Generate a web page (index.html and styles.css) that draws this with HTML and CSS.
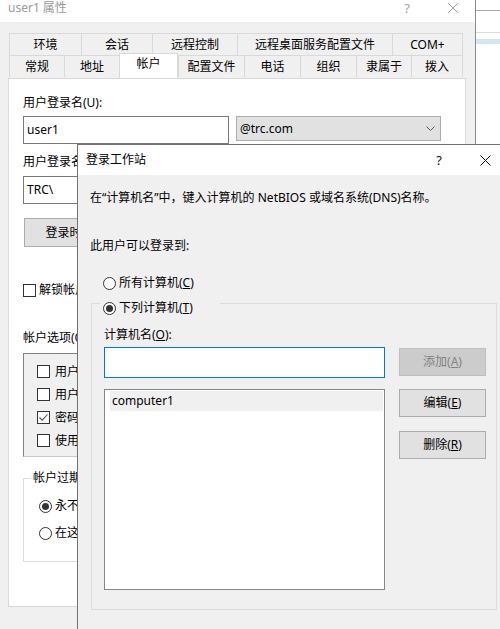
FILE: index.html
```html
<!DOCTYPE html>
<html lang="zh-CN">
<head>
<meta charset="utf-8">
<title>user1 属性</title>
<link rel="stylesheet" href="styles.css">
</head>
<body>
<div class="screen">
  <div class="win">
    <div class="win-title">
      <span class="win-caption">user1 属性</span>
      <span class="cap cap-help">?</span>
      <span class="cap"><svg width="10" height="10" viewBox="0 0 10 10"><path d="M0.5 0.5L9.5 9.5M9.5 0.5L0.5 9.5" stroke="#a0a0a0" stroke-width="1"/></svg></span>
    </div>
    <div class="win-body">
      <div class="tabs">
        <div class="tab-row row-back">
          <div class="tab">环境</div>
          <div class="tab">会话</div>
          <div class="tab">远程控制</div>
          <div class="tab">远程桌面服务配置文件</div>
          <div class="tab">COM+</div>
        </div>
        <div class="tab-row row-front">
          <div class="tab">常规</div>
          <div class="tab">地址</div>
          <div class="tab sel">帐户</div>
          <div class="tab">配置文件</div>
          <div class="tab">电话</div>
          <div class="tab">组织</div>
          <div class="tab">隶属于</div>
          <div class="tab">拨入</div>
        </div>
      </div>
      <div class="panel">
        <div class="lbl lbl-first">用户登录名(U):</div>
        <div class="field-row">
          <div class="tb tb-wide">user1</div>
          <div class="combo"><span>@trc.com</span><svg width="9" height="5" viewBox="0 0 9 5"><path d="M0.5 0.5L4.5 4.5L8.5 0.5" fill="none" stroke="#5a5a5a" stroke-width="1"/></svg></div>
        </div>
        <div class="lbl lbl-second">用户登录名(Windows 2000 以前版本)(D):</div>
        <div class="field-row field-row-2">
          <div class="tb tb-domain">TRC\</div>
          <div class="tb tb-name">user1</div>
        </div>
        <div class="btn btn-hours">登录时间(L)...</div>
        <div class="check-line">
          <span class="cb"></span><span>解锁帐户(N)</span>
        </div>
        <div class="lbl lbl-options">帐户选项(O):</div>
        <div class="opt-list">
          <div class="opt"><span class="cb"></span><span>用户下次登录时须更改密码</span></div>
          <div class="opt"><span class="cb"></span><span>用户不能更改密码</span></div>
          <div class="opt"><span class="cb on"><svg width="11" height="11" viewBox="0 0 11 11"><path d="M1.5 5.5L4.2 8.2L9.5 2.5" fill="none" stroke="#555" stroke-width="1.1"/></svg></span><span>密码永不过期</span></div>
          <div class="opt"><span class="cb"></span><span>使用可逆加密存储密码</span></div>
          <div class="opt"><span class="cb"></span><span>帐户已禁用</span></div>
        </div>
        <div class="expire">
          <span class="expire-legend">帐户过期</span>
          <div class="radio-line expire-first"><span class="rd on"></span><span>永不过期(V)</span></div>
          <div class="radio-line expire-second"><span class="rd"></span><span>在这之后(E):</span></div>
        </div>
      </div>
    </div>
  </div>
  <div class="desk-strip">
    <div class="desk-line dark"></div>
    <div class="desk-line light"></div>
    <div class="desk-band"></div>
  </div>
</div>

<div class="dlg">
  <div class="dlg-title">
    <span class="dlg-caption">登录工作站</span>
    <span class="cap cap-help dark">?</span>
    <span class="cap"><svg width="11" height="11" viewBox="0 0 11 11"><path d="M0.5 0.5L10.5 10.5M10.5 0.5L0.5 10.5" stroke="#111" stroke-width="1"/></svg></span>
  </div>
  <div class="dlg-body">
    <p class="intro">在“计算机名”中，键入计算机的 NetBIOS 或域名系统(DNS)名称。</p>
    <p class="can">此用户可以登录到:</p>
    <div class="radio-line all"><span class="rd"></span><span>所有计算机(<u>C</u>)</span></div>
    <div class="group">
      <div class="radio-line legend"><span class="rd on"></span><span>下列计算机(<u>T</u>)</span></div>
      <div class="lbl name-lbl">计算机名(<u>O</u>):</div>
      <div class="group-main">
        <div class="col-left">
          <div class="name-input"></div>
          <div class="pc-list">
            <div class="pc-item">computer1</div>
          </div>
        </div>
        <div class="col-right">
          <div class="btn dbtn disabled">添加(<u>A</u>)</div>
          <div class="btn dbtn">编辑(<u>E</u>)</div>
          <div class="btn dbtn">删除(<u>R</u>)</div>
        </div>
      </div>
    </div>
  </div>
</div>
</body>
</html>
```

FILE: styles.css
```css
* { box-sizing: border-box; }

html, body {
  margin: 0;
  padding: 0;
}

body {
  width: 500px;
  height: 629px;
  overflow: hidden;
  position: relative;
  background: #fff;
  color: #000;
  font-family: "Noto Sans", "Noto Sans CJK SC", sans-serif;
  font-size: 12px;
  line-height: 16px;
}

p { margin: 0; }
u { text-decoration: underline; text-underline-offset: 1px; }

.screen {
  display: flex;
  height: 629px;
}

/* ---------- property sheet window ---------- */
.win {
  width: 476px;
  flex: none;
  border-right: 1px solid #8c8c8c;
  display: flex;
  flex-direction: column;
  background: #f0f0f0;
}

.win-title {
  height: 22px;
  flex: none;
  background: #fff;
  display: flex;
  color: #9a9a9a;
}

.win-caption {
  flex: 1;
  padding-left: 8px;
  font-size: 12px;
  line-height: 16px;
}

.cap {
  width: 46px;
  flex: none;
  display: flex;
  justify-content: center;
  align-items: center;
  height: 16px;
}

.win-title .cap:last-child { width: 45px; }

.cap-help {
  font-family: "Noto Sans", sans-serif;
  font-size: 13px;
  color: #a0a0a0;
}

.win-body {
  flex: 1;
  padding: 11px 0 0 8px;
}

.tab-row {
  display: grid;
  margin-left: 1px;
  width: 454px;
}

.row-back { grid-template-columns: 72px 71px 85px 155px 71px; }
.row-front { grid-template-columns: 55px 55px 59px 66px 56px 56px 55px 52px; }

.tab {
  height: 22px;
  border-top: 1px solid #d9d9d9;
  border-left: 1px solid #d9d9d9;
  background: #f0f0f0;
  text-align: center;
  line-height: 21px;
  white-space: nowrap;
}

.tab:last-child { border-right: 1px solid #d9d9d9; }

.tab.sel {
  position: relative;
  z-index: 1;
  background: #fff;
  margin-top: -2px;
  height: 25px;
  line-height: 20px;
  border-right: 1px solid #d9d9d9;
}

.panel {
  width: 458px;
  height: 529px;
  border: 1px solid #d9d9d9;
  background: #fff;
  padding-left: 14px;
}

.lbl { line-height: 16px; white-space: nowrap; }
.lbl-first { margin-top: 16px; }
.lbl-second { margin-top: 10px; }
.lbl-options { margin-top: 32px; }

.field-row {
  display: flex;
  gap: 7px;
  margin-top: 5px;
  align-items: flex-start;
}

.field-row-2 { margin-top: 6px; }

.tb {
  height: 28px;
  border: 1px solid #7a7a7a;
  background: #fff;
  padding-left: 3px;
  line-height: 26px;
}

.tb-wide { width: 206px; }
.tb-domain { width: 150px; }
.tb-name { width: 255px; }

.combo {
  width: 205px;
  height: 25px;
  border: 1px solid #adadad;
  background: #e1e1e1;
  padding: 0 5px 0 3px;
  display: flex;
  align-items: center;
  justify-content: space-between;
}

.btn {
  height: 28px;
  border: 1px solid #adadad;
  background: #e1e1e1;
  text-align: center;
  line-height: 26px;
  white-space: nowrap;
}

.btn-hours {
  width: 114px;
  height: 29px;
  margin: 14px 0 0 1px;
  line-height: 27px;
}

.cb {
  width: 13px;
  height: 13px;
  flex: none;
  border: 1px solid #333;
  background: #fff;
  display: flex;
  align-items: center;
  justify-content: center;
}

.check-line {
  margin-top: 35px;
  display: flex;
  align-items: center;
  gap: 3px;
  height: 16px;
}

.opt-list {
  margin-top: 7px;
  width: 410px;
  height: 104px;
  border: 1px solid #828282;
  border-bottom-color: #c8c8c8;
  background: #f0f0f0;
  padding: 6px 0 0 13px;
  overflow: hidden;
}

.opt {
  height: 23px;
  display: flex;
  align-items: center;
  gap: 5px;
  white-space: nowrap;
}

.expire {
  position: relative;
  margin-top: 21px;
  width: 410px;
  height: 84px;
  border: 1px solid #dcdcdc;
  padding-left: 15px;
}

.expire-legend {
  position: absolute;
  left: 7px;
  top: -9px;
  padding: 0 2px;
  background: #fff;
  line-height: 16px;
}

.radio-line {
  display: flex;
  align-items: center;
  gap: 3px;
  height: 16px;
  white-space: nowrap;
}

.expire-first { margin-top: 19px; }
.expire-second { margin-top: 11px; }

.rd {
  width: 13px;
  height: 13px;
  flex: none;
  border: 1px solid #333;
  border-radius: 50%;
  background: #fff;
  position: relative;
}

.rd.on::after {
  content: "";
  position: absolute;
  left: 2px;
  top: 2px;
  width: 7px;
  height: 7px;
  border-radius: 50%;
  background: #333;
}

/* ---------- desktop behind ---------- */
.desk-strip {
  flex: 1;
  background: #fff;
}

.desk-line { height: 1px; }
.desk-line.dark { margin-top: 10px; background: #a8a8a8; }
.desk-line.light { margin-top: 21px; background: #dcdcdc; }
.desk-band { margin-top: 6px; height: 5px; background: #d7e5f3; }

/* ---------- logon workstations dialog ---------- */
.dlg {
  position: absolute;
  left: 77px;
  top: 144px;
  width: 432px;
  height: 500px;
  border: 1px solid #737373;
  background: #f0f0f0;
}

.dlg-title {
  height: 30px;
  background: #fff;
  display: flex;
  align-items: center;
}

.dlg-caption {
  flex: 1;
  padding-left: 8px;
}

.dlg-title .cap { height: 30px; }
.cap-help.dark { color: #111; }

.dlg-body {
  padding: 0 11px 0 12px;
}

.intro { margin-top: 15px; white-space: nowrap; }
.can { margin-top: 32px; }

.radio-line.all {
  margin-top: 21px;
  padding-left: 13px;
}

.group {
  position: relative;
  margin: 12px 0 0 1px;
  width: 406px;
  height: 307px;
  border: 1px solid #dcdcdc;
  padding-left: 12px;
}

.radio-line.legend {
  position: absolute;
  left: 8px;
  top: -4px;
  width: 120px;
  padding-left: 3px;
  background: #f0f0f0;
}

.name-lbl { margin-top: 23px; }

.group-main {
  display: flex;
  gap: 14px;
  margin-top: 4px;
}

.col-left { width: 281px; }

.name-input {
  height: 31px;
  border: 1px solid #0078d7;
  background: #fff;
}

.pc-list {
  margin-top: 11px;
  height: 201px;
  border: 1px solid #828790;
  background: #fff;
  padding: 1px 1px 0 5px;
}

.pc-item {
  height: 20px;
  line-height: 20px;
  background: #f0f0f0;
  padding-left: 2px;
}

.col-right {
  width: 87px;
  display: flex;
  flex-direction: column;
  padding-top: 1px;
  gap: 13px;
}

.dbtn { width: 87px; }
.dbtn + .dbtn + .dbtn { margin-top: 1px; }

.btn.disabled {
  background: #cccccc;
  border-color: #bfbfbf;
  color: #838383;
}
```
